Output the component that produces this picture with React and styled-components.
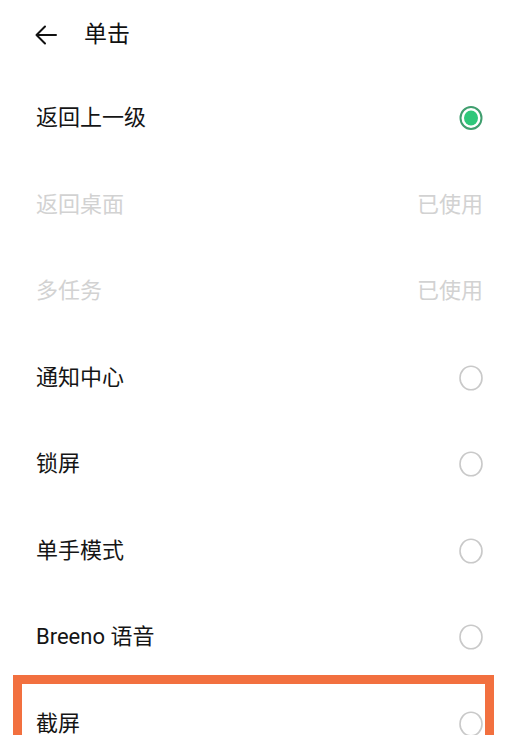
import React from "react";
import styled, { createGlobalStyle } from "styled-components";

const Global = createGlobalStyle`
  html, body { margin: 0; padding: 0; background: #ffffff; }
  body {
    font-family: Roboto, "Noto Sans CJK SC", "Noto Sans", sans-serif;
    -webkit-font-smoothing: antialiased;
  }
`;

const Page = styled.div`
  width: 517px;
  height: 735px;
  overflow: hidden;
  background: #fff;
`;

const Header = styled.div`
  height: 75px;
  box-sizing: border-box;
  padding: 0 0 6px 34px;
  display: flex;
  align-items: center;
  gap: 26px;
`;

const BackIcon = styled.svg`
  width: 24px;
  height: 24px;
  display: block;
`;

const Title = styled.div`
  font-size: 23px;
  color: #111;
  line-height: 1;
`;

const List = styled.div`
  display: flex;
  flex-direction: column;
`;

const Row = styled.div`
  position: relative;
  height: 86.5px;
  flex: 0 0 86.5px;
  box-sizing: border-box;
  padding: 0 34px 0 36px;
  display: flex;
  align-items: center;
  justify-content: space-between;
`;

const Label = styled.div`
  font-size: 22px;
  line-height: 1;
  color: ${(p) => (p.$disabled ? "#d2d2d2" : "#151515")};
`;

const Used = styled.div`
  font-size: 22px;
  line-height: 1;
  color: #d2d2d2;
`;

const RadioSvg = styled.svg`
  width: 24px;
  height: 26px;
  display: block;
`;

const Highlight = styled.div`
  position: absolute;
  left: 13px;
  right: 23px;
  top: -6px;
  bottom: -60px;
  border: 9px solid #f2703f;
  pointer-events: none;
`;

function Radio({ checked }) {
  return (
    <RadioSvg viewBox="0 0 24 26">
      {checked ? (
        <>
          <ellipse cx="12" cy="13" rx="10.5" ry="11" fill="none" stroke="#3f9e6e" strokeWidth="2" />
          <ellipse cx="12" cy="13" rx="7" ry="7.5" fill="#2fc77a" />
        </>
      ) : (
        <ellipse cx="12" cy="13" rx="11" ry="11.8" fill="none" stroke="#c9c9c9" strokeWidth="1.6" />
      )}
    </RadioSvg>
  );
}

const items = [
  { label: "返回上一级", state: "checked" },
  { label: "返回桌面", state: "used" },
  { label: "多任务", state: "used" },
  { label: "通知中心", state: "off" },
  { label: "锁屏", state: "off" },
  { label: "单手模式", state: "off" },
  { label: "Breeno 语音", state: "off" },
  { label: "截屏", state: "off", highlight: true },
];

export default function App() {
  return (
    <Page>
      <Global />
      <Header>
        <BackIcon viewBox="0 0 24 24">
          <path d="M22 12H2.5M11 3.5L2.5 12L11 20.5" fill="none" stroke="#111" strokeWidth="2" strokeLinecap="round" strokeLinejoin="round" />
        </BackIcon>
        <Title>单击</Title>
      </Header>
      <List>
        {items.map((it) => (
          <Row key={it.label}>
            <Label $disabled={it.state === "used"}>{it.label}</Label>
            {it.state === "used" ? <Used>已使用</Used> : <Radio checked={it.state === "checked"} />}
            {it.highlight && <Highlight />}
          </Row>
        ))}
      </List>
    </Page>
  );
}
